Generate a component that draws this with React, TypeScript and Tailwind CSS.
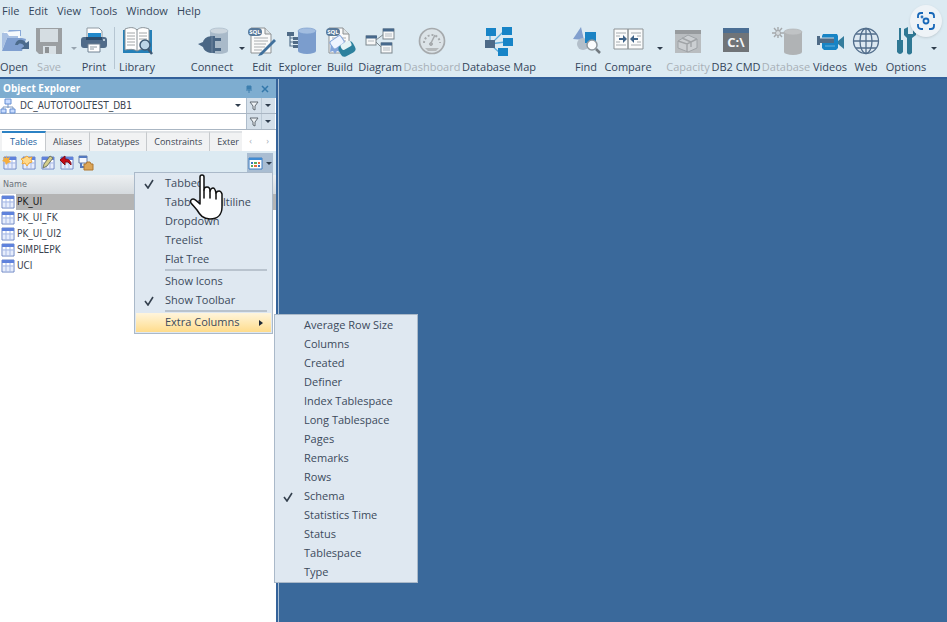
import React, { useState } from 'react';

const tableNames = ['PK_UI', 'PK_UI_FK', 'PK_UI_UI2', 'SIMPLEPK', 'UCI'];
const tabs = ['Tables', 'Aliases', 'Datatypes', 'Constraints'];
const extraColumns = [
  'Average Row Size', 'Columns', 'Created', 'Definer', 'Index Tablespace', 'Long Tablespace', 'Pages',
  'Remarks', 'Rows', 'Schema', 'Statistics Time', 'Status', 'Tablespace', 'Type',
];

/* ---------- TOOLBAR ICONS ---------- */

function Cylinder({ x, y, w, h, fill, top }: { x: number; y: number; w: number; h: number; fill: string; top: string }) {
  return (
    <g>
      <path d={`M${x} ${y + 3}v${h - 6}a${w / 2} 3 0 0 0 ${w} 0v${6 - h}z`} fill={fill} />
      <ellipse cx={x + w / 2} cy={y + 3} rx={w / 2} ry="3" fill={top} stroke={fill} strokeWidth=".7" />
    </g>
  );
}

const sqlPage = (
  <g>
    <path d="M3 1h14l6 6v19H3z" fill="#fafafa" stroke="#8d9193" />
    <path d="M17 1v6h6" fill="#dfe3e5" stroke="#8d9193" />
    <path d="M6 11h14M6 14h14M6 17h12M6 20h11M6 23h8" stroke="#a9adb0" />
    <rect x="0" y="1" width="14" height="8" rx="4" fill="#58799a" />
    <text x="7" y="7" textAnchor="middle" fontSize="6" fontWeight="bold" fill="#fff">SQL</text>
  </g>
);

const icons: Record<string, React.ReactNode> = {
  Open: (
    <g>
      <path d="M2 6h5l2-3h12v6H2z" fill="#8aa9d8" />
      <path d="M4 5l16-1v9H4z" fill="#f6fafd" />
      <path d="M2 6v17l5-12h11V9H9L7 6z" fill="#a9c1e3" />
      <path d="M2 24 7 11h15l4 1-4 12z" fill="#7f9fd0" />
      <path d="M15 18c1-6 8-7 11-2l3-2v8h-8l3-3c-2-3-5-3-6-1z" fill="#4c6b8c" />
    </g>
  ),
  Save: (
    <g>
      <path d="M1 1h26v26H4l-3-3z" fill="#9b9fa2" />
      <path d="M5 2h18v13H5z" fill="#d5dde2" />
      <path d="M8 19h13v8H8z" fill="#d8e0e5" />
      <path d="M10 20h4v6h-4z" fill="#8d9194" />
    </g>
  ),
  Print: (
    <g>
      <path d="M7 1h12l3 3v8H7z" fill="#fff" stroke="#8f9aa3" />
      <path d="M8 6h13v5H8z" fill="#2289cb" />
      <rect x="1" y="10" width="26" height="11" rx="3" fill="#506b89" />
      <path d="M6 10h16v3H6z" fill="#2e4d6c" />
      <path d="M8 17h12v8H8z" fill="#fff" stroke="#708293" />
      <path d="M10 20h7M10 22h4" stroke="#8e9aa4" />
      <circle cx="24" cy="13" r="1" fill="#dbe9f2" />
    </g>
  ),
  Library: (
    <g>
      <path d="M0 3h29v23H0z" fill="#2580b8" />
      <path d="M2 2c5-2 9-2 12 1 3-3 7-3 12-1v21c-5-1-9-1-12 1-3-2-7-2-12-1z" fill="#fff" stroke="#879096" />
      <path d="M14 3v21" stroke="#879096" />
      <path d="M4 6h8M4 9h8M4 12h8M4 15h8M4 18h8M16 6h8M16 9h8M16 12h8" stroke="#a2a6a8" />
      <circle cx="22" cy="18" r="5" fill="#bcd5e7" stroke="#3e5a75" strokeWidth="1.5" />
      <path d="m25 22 4 5" stroke="#3e5a75" strokeWidth="2.5" />
    </g>
  ),
  Connect: (
    <g>
      <Cylinder x={12} y={1} w={18} h={26} fill="#a9bac9" top="#ccd6de" />
      <path d="M0 17 5 15c1-4 5-6 10-6h2v2h6v3h-6v7h6v3h-6v2h-2c-5 0-9-2-10-6z" fill="#4a6785" />
      <path d="M14 9v17" stroke="#7088a1" />
    </g>
  ),
  Edit: (
    <g>
      {sqlPage}
      <path d="M12 26 26 12l2 2-14 14-4 1z" fill="#40709c" />
    </g>
  ),
  Explorer: (
    <g>
      <Cylinder x={12} y={1} w={18} h={26} fill="#7b9dcd" top="#a2bde0" />
      <path d="M4 7v12h5M4 11h5M4 15h5" fill="none" stroke="#58748f" strokeWidth="1.2" />
      <path d="M1 5h7v4H1zM7 10h5v3H7zM7 14h5v3H7zM7 18h5v3H7z" fill="#4f6b87" />
    </g>
  ),
  Build: (
    <g>
      {sqlPage}
      <path d="m5 15 5 2 8-3-4 11-3-1-2 3-2-3-3 1z" fill="#84a5da" />
      <rect x="5" y="11" width="13" height="9" rx="2" fill="#eef4ff" stroke="#84a5da" transform="rotate(-35 11 16)" />
      <rect x="13" y="16" width="16" height="12" rx="4" fill="#2d819e" transform="rotate(-28 21 22)" />
      <rect x="15" y="15" width="11" height="6" rx="2" fill="#e5f3f5" transform="rotate(-28 21 19)" />
    </g>
  ),
  Diagram: (
    <g stroke="#7d878e">
      <path d="m10 13 8-6M10 15l6 6" fill="none" />
      <rect x="0" y="9" width="10" height="9" fill="#f7f8f8" />
      <rect x="17" y="2" width="11" height="10" fill="#f7f8f8" />
      <rect x="15" y="16" width="11" height="10" fill="#f7f8f8" />
      <path d="M0 10h11M17 3h11M15 17h11" stroke="#47698c" strokeWidth="3" />
      <path d="M19 7h7M19 9h7M17 21h7M17 23h7M2 14h6" stroke="#b3bac0" />
    </g>
  ),
  Dashboard: (
    <g fill="none" stroke="#a6aaad">
      <circle cx="14" cy="14" r="12.5" strokeWidth="1.7" fill="#dce3e7" />
      <path d="M6 16a8 8 0 0 1 16 0" strokeWidth="2" strokeDasharray="2 2" />
      <path d="m17 8-4 8" strokeWidth="1.5" />
      <circle cx="13" cy="17" r="1.5" fill="#a6aaad" />
      <path d="M7 21h14l-3 3h-8z" fill="#b5b9bb" stroke="none" />
    </g>
  ),
  'Database Map': (
    <g>
      <path d="M5 6v12l14-14M5 17l15-2M6 18l9 8" fill="none" stroke="#5baad9" strokeWidth="1.3" />
      <path d="M1 1h10v8H1zM17 0h10v8H17zM18 11h10v8H18zM13 21h10v8H13z" fill="#1784c7" />
      <path d="M0 13h10v8H0z" fill="#4d6a88" />
    </g>
  ),
  Find: (
    <g>
      <path d="m9 0 3 13-11-1z" fill="#819fce" />
      <circle cx="11" cy="17" r="6" fill="#b3bfca" />
      <path d="M13 5h11v11H13z" fill="#1b83c4" />
      <circle cx="20" cy="18" r="5" fill="#fafcfd" stroke="#8e979e" strokeWidth="1.5" />
      <path d="m24 22 4 4" stroke="#71797f" strokeWidth="2.5" />
    </g>
  ),
  Compare: (
    <g>
      <path d="M0 2h29v20H0z" fill="#fafbfb" stroke="#8d9396" />
      <path d="M14 2v20" stroke="#8d9396" strokeWidth="1.5" />
      <path d="M2 6h10M2 9h4M2 15h4M2 18h10M17 6h10M23 9h4M23 15h4M17 18h10" stroke="#a6acb0" />
      <path d="M5 11h4V8l4 4-4 4v-3H5zM24 11h-4V8l-4 4 4 4v-3h4z" fill="#3e6388" />
    </g>
  ),
  Capacity: (
    <g>
      <path d="M1 3h26v23H1z" fill="#b9bdc0" />
      <path d="M1 3h26v4H1z" fill="#979b9e" />
      <path d="m4 14 10-6 9 4v9l-9 4-10-4z" fill="#cbcfd2" stroke="#9fa4a8" />
      <path d="m4 14 9 3 10-5M13 17v8M8 11l9 4v5" fill="none" stroke="#a0a4a7" strokeWidth="1.4" />
    </g>
  ),
  'DB2 CMD': (
    <g>
      <path d="M1 1h26v24H1z" fill="#707478" />
      <path d="M1 1h26v5H1z" fill="#4a6e94" />
      <text x="14" y="20" textAnchor="middle" fontSize="13" fontWeight="bold" fill="#f4f6f7">C:\</text>
    </g>
  ),
  Database: (
    <g>
      <Cylinder x={12} y={2} w={18} h={26} fill="#b0b3b5" top="#c0c3c5" />
      <path d="M6 0v11M0 6h12M2 1l8 9M10 1 2 10" stroke="#a5a9ac" strokeWidth="1.4" />
      <circle cx="6" cy="6" r="2.5" fill="#d4dbdf" stroke="#a5a9ac" />
    </g>
  ),
  Videos: (
    <g>
      <path d="M7 7h14l1 2v12l-2 2H8l-2-2V9z" fill="#1784c5" />
      <path d="m22 14 6-5v13l-6-5z" fill="#347d9d" />
      <path d="M1 9h3v2h14v5H4v2H1z" fill="#4f6b86" />
      <path d="M4 11h14" stroke="#c6d7e4" />
      <path d="M9 19h10" stroke="#66b1dd" />
    </g>
  ),
  Web: (
    <g fill="none" stroke="#526e8c" strokeWidth="1.3">
      <circle cx="14" cy="14" r="12.5" fill="#dce8f1" />
      <ellipse cx="14" cy="14" rx="6" ry="12.5" />
      <path d="M14 1v26M1 14h26M4 7h20M4 21h20" />
    </g>
  ),
  Options: (
    <g fill="#2f7894">
      <path d="M7 1h2v12h2v12q-3 4-6 0V13h2z" />
      <path d="M12 2v6l3 3v15q2 3 5 0V11l4-3V2l-3-2v7h-5V0z" />
    </g>
  ),
};

function Caret() {
  return <span className="border-x-3 border-t-3 border-x-transparent border-t-[#2f3d4d]" />;
}

function Tool({ name, width, disabled }: { name: string; width: string; disabled?: boolean }) {
  return (
    <button
      disabled={disabled}
      className={`${width} shrink-0 flex flex-col items-center whitespace-nowrap hover:bg-white/40 ${disabled ? 'text-[#a8b0b7]' : 'text-[#34465b]'}`}
    >
      <svg viewBox="0 0 28 28" className="size-7 overflow-visible" aria-hidden="true">{icons[name]}</svg>
      <span className="flex justify-center w-0 mt-1 leading-4">{name}</span>
    </button>
  );
}

function MoreButton({ label, width, disabled }: { label: string; width: string; disabled?: boolean }) {
  return (
    <button aria-label={label} disabled={disabled} className={`${width} shrink-0 flex justify-center pt-5 ${disabled ? 'opacity-40' : ''}`}>
      <Caret />
    </button>
  );
}

/* ---------- OBJECT EXPLORER ICONS ---------- */

function TableIcon({ mark }: { mark?: string }) {
  return (
    <svg viewBox="0 0 16 16" className="size-4 shrink-0" aria-hidden="true">
      <path d="M2 2h12v12H2z" fill="#fff" stroke="#6d86c6" />
      <path d="M2 2h12v3H2z" fill="#5f82dc" />
      <path d="M3 7h10v6H3z" fill="#e6edfc" />
      <path d="M6 5v9M10 5v9M2 8h12" stroke="#a7b9e6" />
      {mark === 'new' && <path d="m4 0 1 3 3-1-1 3 2 2-3 1-2 2-1-3-3-1 2-2-1-2 3 1z" fill="#f5ae3d" />}
      {mark === 'copy' && <path d="m6 1 2 2 3-1-1 3 1 2-3 1-2 3-2-3-3 1 1-3-2-2 3-1z" fill="#ffd98a" stroke="#f0a838" />}
      {mark === 'edit' && <path d="m4 9 6-8 3 2-6 8-4 2z" fill="#d6cf8c" stroke="#707865" />}
      {mark === 'drop' && <path d="m1 5 5-4v3c4 0 6 2 6 6l-3-3H6v3z" fill="#c50918" stroke="#820d16" />}
    </svg>
  );
}

function Funnel() {
  return (
    <svg viewBox="0 0 10 10" className="size-2.5" aria-hidden="true">
      <path d="M1 1h8L6 5v4L4 8V5z" fill="#edf1f4" stroke="#626b73" />
    </svg>
  );
}

function FilterButtons({ label }: { label: string }) {
  return (
    <div className="w-[29px] mx-px flex shrink-0 bg-[#d5e0ea] border-l border-[#aebdcc]">
      <button aria-label={label} className="flex-1 flex items-center justify-center"><Funnel /></button>
      <button aria-label={`${label} options`} className="flex-1 flex items-center justify-center border-l border-[#bccad6]"><Caret /></button>
    </div>
  );
}

/* ---------- MENUS ---------- */

function MenuItem({ label, checked, onClick }: { label: string; checked?: boolean; onClick?: () => void }) {
  return (
    <button role="menuitemcheckbox" aria-checked={!!checked} onClick={onClick} className="h-[19px] w-full flex items-center text-left hover:bg-[#ffe8a6] whitespace-nowrap">
      <span className="w-[29px] pr-1 shrink-0 flex justify-center">
        {checked && (
          <svg viewBox="0 0 10 10" className="size-2.5" aria-hidden="true">
            <path d="m1 5 3 4 5-8" fill="none" stroke="#34404e" strokeWidth="1.6" />
          </svg>
        )}
      </span>
      {label}
    </button>
  );
}

function MenuLine() {
  return <div role="separator" className="h-[3px] ml-[29px] mr-1 border-t-2 border-[#b9c3ce]" />;
}

function ViewMenu() {
  const [view, setView] = useState('Tabbed');
  const [columns, setColumns] = useState<string[]>(['Schema']);
  const [showIcons, setShowIcons] = useState(false);
  const [showToolbar, setShowToolbar] = useState(true);

  const toggleColumn = (name: string) => {
    setColumns(prev => (prev.includes(name) ? prev.filter(c => c !== name) : [...prev, name]));
  };

  return (
    <div role="menu" aria-label="View" className="absolute top-[19px] right-0 z-10 w-[139px] p-px border border-[#aab9c9] bg-[#dfe8f1] font-['Open_Sans',sans-serif] text-[11px] text-[#3c4a5c]">
      {['Tabbed', 'Tabbed Multiline', 'Dropdown', 'Treelist', 'Flat Tree'].map(v => (
        <MenuItem key={v} label={v} checked={view === v} onClick={() => setView(v)} />
      ))}
      <MenuLine />
      <MenuItem label="Show Icons" checked={showIcons} onClick={() => setShowIcons(!showIcons)} />
      <MenuItem label="Show Toolbar" checked={showToolbar} onClick={() => setShowToolbar(!showToolbar)} />
      <MenuLine />
      <div className="relative">
        <button role="menuitem" aria-haspopup="menu" className="h-[19px] w-full pl-[29px] pr-2 flex items-center justify-between bg-linear-to-b from-[#fff5dc] via-[#ffe9b4] to-[#ffdc8b]">
          Extra Columns
          <span className="border-y-3 border-l-4 border-y-transparent border-l-[#202a36]" />
        </button>
        <div role="menu" aria-label="Extra Columns" className="absolute left-full top-px ml-[3px] w-36 pt-px border border-[#aab9c9] bg-[#dfe8f1]">
          {extraColumns.map(c => (
            <MenuItem key={c} label={c} checked={columns.includes(c)} onClick={() => toggleColumn(c)} />
          ))}
        </div>
      </div>
    </div>
  );
}

function ObjectExplorer() {
  const [tab, setTab] = useState('Tables');
  const [selected, setSelected] = useState('PK_UI');

  return (
    <aside className="w-[276px] shrink-0 flex flex-col bg-white text-[10px] text-[#3b4450]">
      <div className="h-[19px] px-[3px] flex items-center bg-[#7eadd0] text-white">
        <h2 className="flex-1 font-bold">Object Explorer</h2>
        <button aria-label="Pin" className="w-4 flex justify-center">
          <svg viewBox="0 0 8 8" className="size-2" aria-hidden="true"><path d="M2 1h4v3H2zM1 5h6M4 5v3" fill="#3d7eae" stroke="#3d7eae" /></svg>
        </button>
        <button aria-label="Close" className="w-4 flex justify-center">
          <svg viewBox="0 0 8 8" className="size-2" aria-hidden="true"><path d="m1 1 6 6M7 1 1 7" stroke="#3378aa" strokeWidth="1.5" /></svg>
        </button>
      </div>

      <div className="h-4 flex border-b border-[#aab6c3]">
        <svg viewBox="0 0 16 16" className="w-4 h-4 shrink-0" aria-hidden="true">
          <path d="M8 6v4M3 12V9h10v3" fill="none" stroke="#7995bd" />
          <path d="M5 1h6v5H5zM1 11h5v4H1zM10 11h5v4h-5z" fill="#c8dcff" stroke="#648ed2" />
        </svg>
        <div className="relative flex-1 flex">
          <select aria-label="Datasource" className="flex-1 appearance-none pl-1 bg-transparent outline-none font-['DejaVu_Sans_Condensed','DejaVu_Sans',sans-serif] text-[10px]">
            <option>DC_AUTOTOOLTEST_DB1</option>
          </select>
          <span className="absolute right-1 top-1.5 flex pointer-events-none"><Caret /></span>
        </div>
        <FilterButtons label="Datasource filter" />
      </div>
      <div className="h-4 flex border-b border-[#aab6c3]">
        <input aria-label="Filter objects" className="flex-1 min-w-0 px-1 outline-none" />
        <FilterButtons label="Object filter" />
      </div>

      <div role="tablist" className="mt-px h-5 pl-0.5 flex bg-[#f1f2f3] text-[9px] overflow-hidden">
        {tabs.map(t => (
          <button
            key={t}
            role="tab"
            aria-selected={tab === t}
            onClick={() => setTab(t)}
            className={`shrink-0 border-r border-t-2 border-r-[#c6c9cc] ${tab === t ? 'px-2 bg-white border-t-[#2c82c4] text-[#1b5fa0]' : 'px-[7px] border-t-[#dfe2e5]'}`}
          >
            {t}
          </button>
        ))}
        <button role="tab" aria-selected={false} className="flex-1 min-w-0 pl-[7px] text-left overflow-hidden border-t-2 border-[#dfe2e5]">Exter</button>
        <div className="w-[34px] shrink-0 flex justify-around items-center bg-white text-[#a9b1ba]">
          <button aria-label="Previous tabs">‹</button>
          <button aria-label="Next tabs">›</button>
        </div>
      </div>

      <div className="h-6 pl-0.5 pr-[3px] flex items-center bg-[#dceaf2]">
        <div className="flex-1 flex gap-[3px]">
          <button aria-label="New"><TableIcon mark="new" /></button>
          <button aria-label="Create like"><TableIcon mark="copy" /></button>
          <button aria-label="Edit"><TableIcon mark="edit" /></button>
          <button aria-label="Drop"><TableIcon mark="drop" /></button>
          <button aria-label="Extract">
            <svg viewBox="0 0 16 16" className="size-4" aria-hidden="true">
              <path d="M1 1h8v7H1z" fill="#f5f8ff" stroke="#667da5" />
              <path d="M1 2h8M3 8v4h3" fill="none" stroke="#5379bf" strokeWidth="2" />
              <path d="M6 9h2l1-2h3l1 2h2v6H6z" fill="#dba557" stroke="#ae7631" />
            </svg>
          </button>
        </div>
        <div className="relative">
          <button aria-label="View style" aria-haspopup="menu" className="h-5 w-[26px] flex items-center justify-around bg-[#a9bdd2]">
            <svg viewBox="0 0 15 13" className="w-[15px] h-[13px]" aria-hidden="true">
              <path d="M1 1h13v11H1z" fill="#fff" stroke="#3d7fc3" />
              <path d="M1 1h13v2H1z" fill="#3f8bd3" />
              <path d="M3 5h2v2H3zM10 8h2v2h-2z" fill="#3978bf" />
              <path d="M6 5h3v2H6zM3 8h2v2H3z" fill="#59a85c" />
              <path d="M10 5h2v2h-2zM6 8h3v2H6z" fill="#e66b3d" />
            </svg>
            <Caret />
          </button>
          <ViewMenu />
        </div>
      </div>

      <table className="w-full border-collapse font-['DejaVu_Sans_Condensed','DejaVu_Sans',sans-serif] text-[10px]">
        <thead>
          <tr className="h-[19px] bg-linear-to-b from-[#edf0f2] to-[#d5dade]">
            <th className="p-0 pl-[3px] text-left font-normal text-[9px] text-[#6b727a]">Name</th>
          </tr>
        </thead>
        <tbody>
          {tableNames.map(name => (
            <tr key={name} onClick={() => setSelected(name)}>
              <td className="p-0">
                <div className="h-4 flex items-center">
                  <TableIcon />
                  <span className={`flex-1 pl-px leading-4 ${selected === name ? 'bg-[#b4b4b4] text-[#202020]' : ''}`}>{name}</span>
                </div>
              </td>
            </tr>
          ))}
        </tbody>
      </table>
    </aside>
  );
}

export default function App() {
  return (
    <div className="relative min-h-screen flex flex-col overflow-hidden bg-[#3a699b] font-['Open_Sans',sans-serif] text-[11px]">
      {/* MENU + TOOLBAR */}
      <header className="bg-[#dceaf2] text-[#34465b]">
        <nav className="h-[22px] pl-0.5 flex items-center gap-[9px]">
          {['File', 'Edit', 'View', 'Tools', 'Window', 'Help'].map(m => (
            <button key={m}>{m}</button>
          ))}
        </nav>
        <div className="h-[55px] pt-[5px] flex">
          <Tool name="Open" width="w-7" />
          <Tool name="Save" width="w-[42px]" disabled />
          <MoreButton label="Save options" width="w-2" disabled />
          <Tool name="Print" width="w-8" />
          <div className="w-2 shrink-0 flex justify-center pb-2"><div className="w-px bg-[#b6c6d2]" /></div>
          <Tool name="Library" width="w-[38px]" />
          <div className="w-8 shrink-0" />
          <Tool name="Connect" width="w-12" />
          <MoreButton label="Connect options" width="w-3" />
          <Tool name="Edit" width="w-7" />
          <Tool name="Explorer" width="w-12" />
          <Tool name="Build" width="w-8" />
          <Tool name="Diagram" width="w-12" />
          <Tool name="Dashboard" width="w-14" disabled />
          <Tool name="Database Map" width="w-[78px]" />
          <div className="w-[34px] shrink-0" />
          <Tool name="Find" width="w-7" />
          <Tool name="Compare" width="w-14" />
          <MoreButton label="Compare options" width="w-2" />
          <Tool name="Capacity" width="w-12" disabled />
          <Tool name="DB2 CMD" width="w-12" />
          <Tool name="Database" width="w-[52px]" disabled />
          <Tool name="Videos" width="w-9" />
          <Tool name="Web" width="w-9" />
          <Tool name="Options" width="w-11" />
          <MoreButton label="More options" width="w-3" />
        </div>
      </header>

      <button aria-label="Visual search" className="absolute right-[5px] top-[5px] size-8 rounded-full bg-[#eef3f7] flex items-center justify-center shadow-sm">
        <svg viewBox="0 0 18 18" className="size-[18px]" fill="none" stroke="#1767b8" strokeWidth="1.8" aria-hidden="true">
          <path d="M6 1H4a3 3 0 0 0-3 3v2M12 1h2a3 3 0 0 1 3 3v2M6 17H4a3 3 0 0 1-3-3v-2M12 17h2a3 3 0 0 0 3-3v-2" />
          <circle cx="9" cy="9" r="2.5" />
          <circle cx="5" cy="5" r=".5" />
        </svg>
      </button>

      <main className="flex-1 flex border-t-2 border-[#32609a]">
        <ObjectExplorer />
        <div className="w-[3px] shrink-0 border-r border-[#aac0d6] bg-[#35639a]" />
        <div className="flex-1" />
      </main>

      {/* hand pointer over the open menu */}
      <svg viewBox="0 0 34 46" className="absolute left-[190px] top-[174px] z-20 w-[34px] h-[46px] pointer-events-none" aria-hidden="true">
        <path
          d="M10 28V3q0-2 2-2t2 2v13q0-3 3-3t3 4q1-3 3-3t3 5q1-2 3-2t3 3v13c0 8-5 12-12 12-7 0-10-4-13-9L1 29c-1-2 0-4 2-4s4 2 7 5z"
          fill="#fff" stroke="#111" strokeWidth="1.5" strokeLinejoin="round"
        />
        <path d="M14 16v8M20 17v7M26 19v6" stroke="#111" strokeWidth="1.5" strokeLinecap="round" />
      </svg>
    </div>
  );
}
